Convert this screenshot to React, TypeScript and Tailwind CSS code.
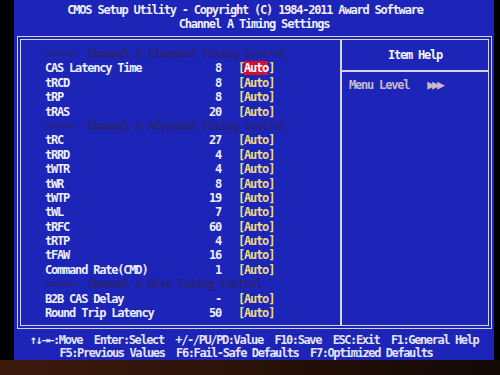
type Row =
  | { kind: 'section'; text: string }
  | { kind: 'item'; label: string; value: string; selected?: boolean }

const rows: Row[] = [
  { kind: 'section', text: 'Channel A Standard Timing Control' },
  { kind: 'item', label: 'CAS Latency Time', value: '8', selected: true },
  { kind: 'item', label: 'tRCD', value: '8' },
  { kind: 'item', label: 'tRP', value: '8' },
  { kind: 'item', label: 'tRAS', value: '20' },
  { kind: 'section', text: 'Channel A Advanced Timing Control' },
  { kind: 'item', label: 'tRC', value: '27' },
  { kind: 'item', label: 'tRRD', value: '4' },
  { kind: 'item', label: 'tWTR', value: '4' },
  { kind: 'item', label: 'tWR', value: '8' },
  { kind: 'item', label: 'tWTP', value: '19' },
  { kind: 'item', label: 'tWL', value: '7' },
  { kind: 'item', label: 'tRFC', value: '60' },
  { kind: 'item', label: 'tRTP', value: '4' },
  { kind: 'item', label: 'tFAW', value: '16' },
  { kind: 'item', label: 'Command Rate(CMD)', value: '1' },
  { kind: 'section', text: 'Channel A Misc Timing Control' },
  { kind: 'item', label: 'B2B CAS Delay', value: '-' },
  { kind: 'item', label: 'Round Trip Latency', value: '50' },
]

function TimingRow({ row }: { row: Row }) {
  if (row.kind === 'section') {
    return (
      <div className="h-[14.4px] leading-[14.4px] whitespace-pre text-[#28227a]">
        {'>>>>>  '}
        {row.text}
      </div>
    )
  }
  return (
    <div className="h-[14.4px] leading-[14.4px] flex whitespace-pre">
      <div className="w-[176px] flex text-[#eeeef8]">
        <span className="flex-1">{row.label}</span>
        <span>{row.value}</span>
      </div>
      <div className="ml-[17px] text-[#e8df7c]">
        [
        {row.selected ? (
          <span className="bg-[#d4102c] text-white">Auto</span>
        ) : (
          'Auto'
        )}
        ]
      </div>
    </div>
  )
}

export default function App() {
  return (
    <div className="w-[500px] h-[375px] bg-black overflow-hidden flex flex-col font-['DejaVu_Sans_Mono',monospace] font-bold text-[12px] tracking-[-1.2px]">
      <div className="ml-[14px] w-[480px] h-[360px] shrink-0 bg-[#1d24b8] flex flex-col">
        {/* Title */}
        <div className="pt-[3px] text-center leading-[14px] text-[#eeeef8]">
          <div className="pr-[18px]">CMOS Setup Utility - Copyright (C) 1984-2011 Award Software</div>
          <div>Channel A Timing Settings</div>
        </div>

        {/* Main frame */}
        <div className="mt-[5px] ml-[3px] mr-[2px] h-[293px] border-[4px] border-double border-[#d4d4e4] flex">
          <div className="w-[321px] border-r-2 border-[#d4d4e4] pt-[7px] pl-[24px]">
            {rows.map((r, i) => (
              <TimingRow key={i} row={r} />
            ))}
          </div>
          <div className="flex-1 flex flex-col">
            <div className="h-[32px] border-b-2 border-[#d4d4e4] flex items-center justify-center text-[#f4f4fc]">
              Item Help
            </div>
            <div className="pt-[6px] pl-[7px] leading-[14px] whitespace-pre text-[#c8b8cc] flex items-center">
              <span>{'Menu Level'}</span>
              <span className="ml-[18px] text-[13px] tracking-[-3px]">▶▶▶</span>
            </div>
          </div>
        </div>

        {/* Footer */}
        <div className="mt-[5px] text-center leading-[13px] whitespace-pre text-[#e4e4f4] tracking-[-1.4px]">
          <div>{'↑↓→←:Move  Enter:Select  +/-/PU/PD:Value  F10:Save  ESC:Exit  F1:General Help'}</div>
          <div className="pr-[16px]">{'F5:Previous Values  F6:Fail-Safe Defaults  F7:Optimized Defaults'}</div>
        </div>
      </div>
      <div className="flex-1 bg-gradient-to-r from-[#3e1a0e] via-[#2a1208] to-[#120806]" />
    </div>
  )
}
